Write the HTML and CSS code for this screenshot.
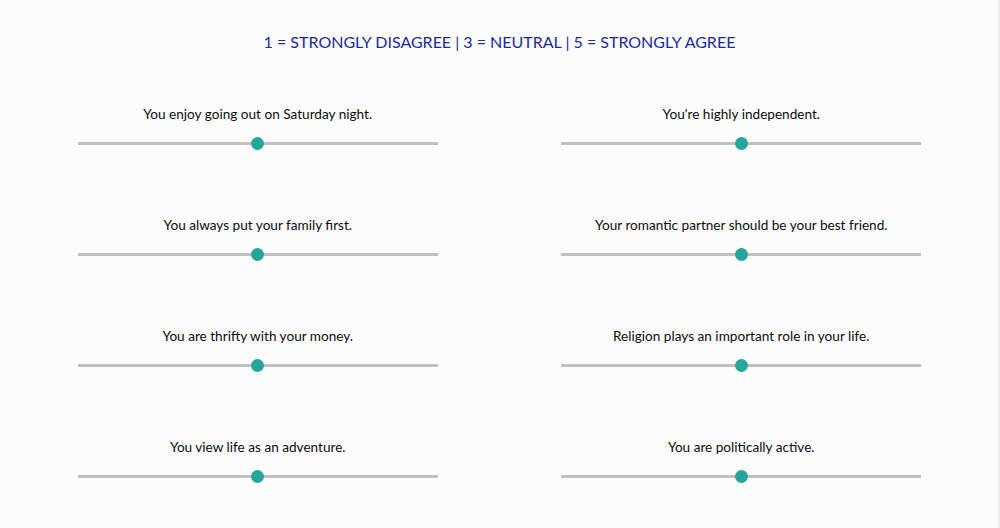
FILE: index.html
```html
<!DOCTYPE html>
<html lang="en">
<head>
<meta charset="utf-8">
<title>Survey</title>
<link rel="stylesheet" href="styles.css">
</head>
<body>
<div class="page">
  <h1 class="scale">1 = STRONGLY DISAGREE | 3 = NEUTRAL | 5 = STRONGLY AGREE</h1>
  <div class="grid">
    <div class="item"><p class="label">You enjoy going out on Saturday night.</p><input class="range" type="range" min="1" max="5" value="3"></div>
    <div class="item"><p class="label">You're highly independent.</p><input class="range" type="range" min="1" max="5" value="3"></div>
    <div class="item"><p class="label">You always put your family first.</p><input class="range" type="range" min="1" max="5" value="3"></div>
    <div class="item"><p class="label">Your romantic partner should be your best friend.</p><input class="range" type="range" min="1" max="5" value="3"></div>
    <div class="item"><p class="label">You are thrifty with your money.</p><input class="range" type="range" min="1" max="5" value="3"></div>
    <div class="item"><p class="label">Religion plays an important role in your life.</p><input class="range" type="range" min="1" max="5" value="3"></div>
    <div class="item"><p class="label">You view life as an adventure.</p><input class="range" type="range" min="1" max="5" value="3"></div>
    <div class="item"><p class="label">You are politically active.</p><input class="range" type="range" min="1" max="5" value="3"></div>
  </div>
</div>
</body>
</html>
```
FILE: styles.css
```css
html, body {
  margin: 0;
  padding: 0;
  background: #fcfcfc;
}
body {
  font-family: Lato, "Liberation Sans", sans-serif;
  color: #111;
}
.page {
  box-sizing: border-box;
  min-height: 528px;
  border-right: 2px solid #ececec;
  padding: 30px 15px 0 16px;
}
.scale {
  margin: 0;
  font-size: 16px;
  line-height: 24px;
  font-weight: 400;
  color: #1c2a9c;
  text-align: center;
}
.grid {
  margin-top: 50px;
  display: grid;
  grid-template-columns: 1fr 1fr;
  row-gap: 65px;
}
.item {
  display: flex;
  flex-direction: column;
  align-items: center;
}
.label {
  margin: 0 0 12px 0;
  font-size: 13.6px;
  line-height: 20px;
  color: #0d0d0d;
}
.range {
  -webkit-appearance: none;
  appearance: none;
  width: 360px;
  height: 14px;
  margin: 0;
  padding: 0;
  background: transparent;
}
.range::-webkit-slider-runnable-track {
  height: 3px;
  background: #c2c0c2;
  border: none;
}
.range::-webkit-slider-thumb {
  -webkit-appearance: none;
  appearance: none;
  width: 13px;
  height: 13px;
  border-radius: 50%;
  background: #26a69a;
  border: none;
  margin-top: -5px;
}
```
